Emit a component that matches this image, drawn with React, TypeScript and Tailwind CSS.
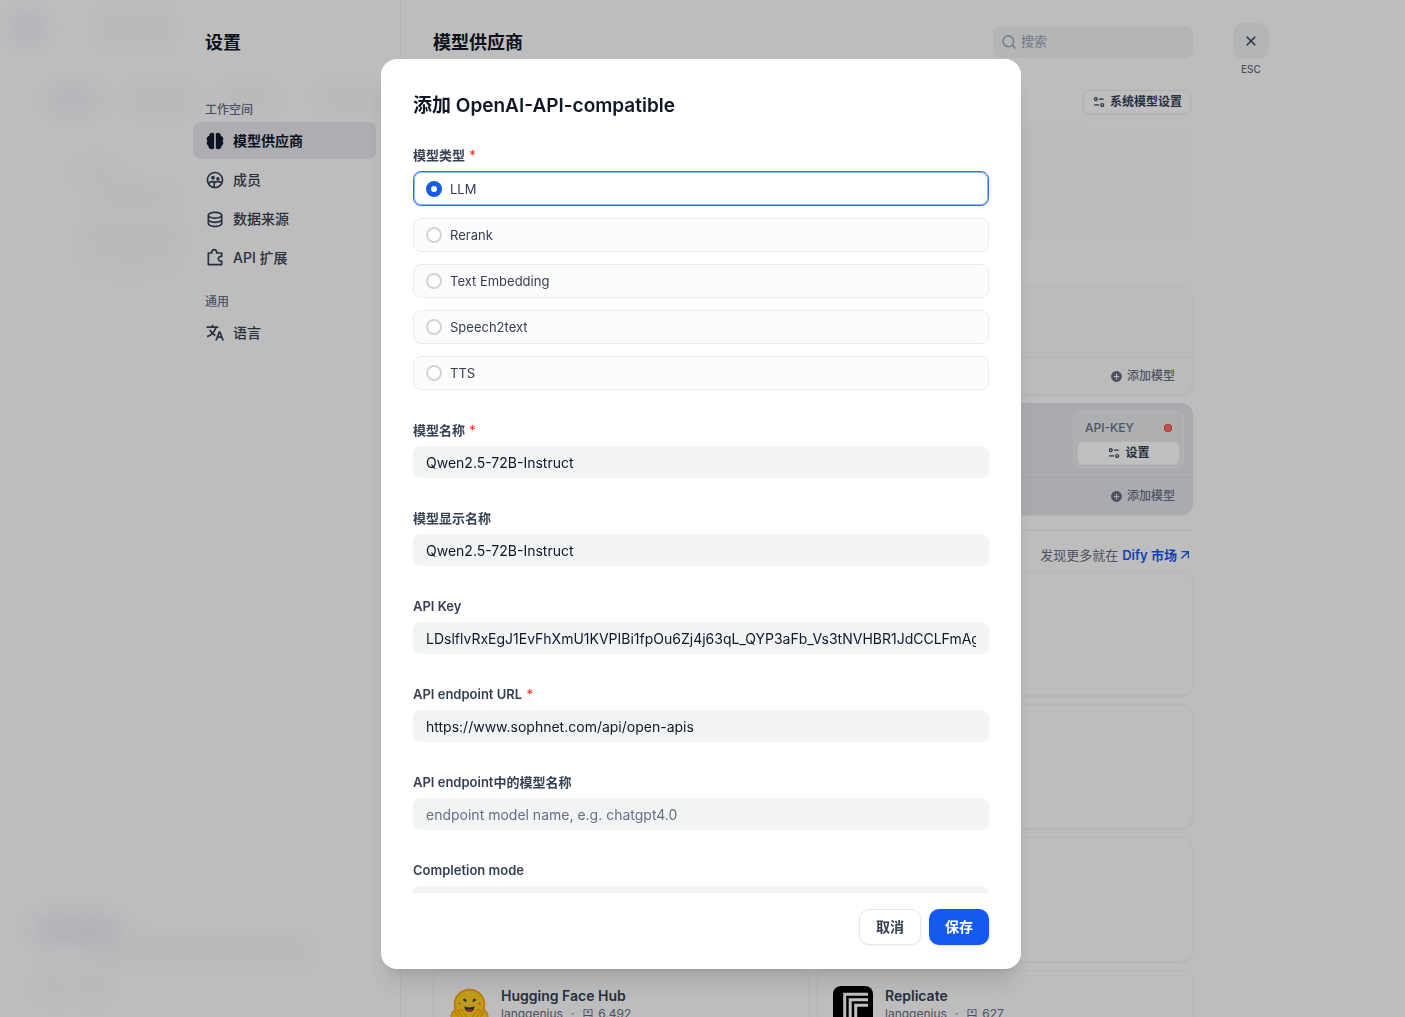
import { useState } from 'react';
import type { ReactNode } from 'react';
import type { IconType } from 'react-icons';
import {
  RiAddCircleFill,
  RiArrowRightUpLine,
  RiBrain2Fill,
  RiCloseLine,
  RiDatabase2Line,
  RiEqualizer2Line,
  RiGroup2Line,
  RiInstallLine,
  RiPuzzle2Line,
  RiSearchLine,
  RiTranslate2,
} from 'react-icons/ri';

type NavItem = {
  label: string;
  icon: IconType;
  active?: boolean;
};

type NavGroup = {
  title: string;
  items: NavItem[];
};

type TextField = {
  id: string;
  label: string;
  required?: boolean;
  value?: string;
  placeholder?: string;
};

const navGroups: NavGroup[] = [
  {
    title: '工作空间',
    items: [
      { label: '模型供应商', icon: RiBrain2Fill, active: true },
      { label: '成员', icon: RiGroup2Line },
      { label: '数据来源', icon: RiDatabase2Line },
      { label: 'API 扩展', icon: RiPuzzle2Line },
    ],
  },
  {
    title: '通用',
    items: [{ label: '语言', icon: RiTranslate2 }],
  },
];

const modelTypes = ['LLM', 'Rerank', 'Text Embedding', 'Speech2text', 'TTS'];

const textFields: TextField[] = [
  { id: 'model-name', label: '模型名称', required: true, value: 'Qwen2.5-72B-Instruct' },
  { id: 'display-name', label: '模型显示名称', value: 'Qwen2.5-72B-Instruct' },
  {
    id: 'api-key',
    label: 'API Key',
    value: 'LDslflvRxEgJ1EvFhXmU1KVPIBi1fpOu6Zj4j63qL_QYP3aFb_Vs3tNVHBR1JdCCLFmAgN',
  },
  { id: 'endpoint-url', label: 'API endpoint URL', required: true, value: 'https://www.sophnet.com/api/open-apis' },
  { id: 'endpoint-model', label: 'API endpoint中的模型名称', placeholder: 'endpoint model name, e.g. chatgpt4.0' },
];

function Backdrop() {
  return (
    <svg className="pointer-events-none absolute inset-0 h-full w-full" aria-hidden="true">
      <defs>
        <filter id="soft" x="-100%" y="-100%" width="300%" height="300%">
          <feGaussianBlur stdDeviation="12" />
        </filter>
      </defs>
      <g filter="url(#soft)" fill="#f4f4f4">
        <circle cx="28" cy="27" r="14" fill="#e6eaf6" />
        <rect x="100" y="18" width="70" height="20" />
        <rect x="50" y="90" width="46" height="18" fill="#ebeef6" />
        <rect x="130" y="90" width="60" height="18" />
        <rect x="225" y="90" width="50" height="14" />
        <rect x="320" y="90" width="70" height="16" />
        <rect x="75" y="165" width="40" height="10" />
        <rect x="95" y="190" width="75" height="12" />
        <rect x="85" y="228" width="95" height="14" />
        <rect x="85" y="258" width="90" height="8" />
        <rect x="36" y="920" width="82" height="20" fill="#e6e8f6" />
        <rect x="90" y="943" width="220" height="16" />
        <circle cx="53" cy="987" r="12" />
        <circle cx="92" cy="987" r="12" />
      </g>
    </svg>
  );
}

function HuggingFaceLogo() {
  return (
    <svg viewBox="0 0 40 40" className="h-10 w-10 shrink-0" aria-hidden="true">
      <circle cx="20.500" cy="18.500" r="15" fill="#ffd21e" stroke="#ff9d0b" strokeWidth="1.600" />
      <circle cx="10.500" cy="17.500" r="1.4" fill="#ff8a4a" />
      <circle cx="30.500" cy="17.500" r="1.4" fill="#ff8a4a" />
      <path d="M13.800 14.500c.1-1.800 2.400-2.500 3.400-.7.500.9.200 2.200-.5 2.600-.5-.5-.6-1.300-1.300-1.500-.5-.1-1 .1-1.600-.4z" fill="#3a3b45" />
      <path d="M27.200 14.500c-.1-1.800-2.400-2.500-3.400-.7-.5.900-.2 2.200.5 2.600.5-.5.600-1.300 1.300-1.500.5-.1 1 .1 1.600-.4z" fill="#3a3b45" />
      <path d="M15.500 20c1.500 1.100 3.100 1.400 5 1.400s3.500-.3 5-1.400c.1 3.600-1.800 6-5 6s-5.100-2.400-5-6z" fill="#3a3b45" />
      <path d="M17.500 24.600c.7-1.200 1.900-1.600 3-.9 1.100-.7 2.300-.3 3 .9-.8.900-1.700 1.400-3 1.400s-2.200-.5-3-1.400z" fill="#ff323d" />
      <g fill="#ffd21e" stroke="#ff9d0b" strokeWidth="1.200">
        <path d="M3.200 28c-1-2 .8-3.300 2.200-2.100-1.200-2.200 1-3.400 2.400-1.800l2.700 2.900c-1.200-3.400 1.200-5.200 2.800-2.200l4.400 6.200c2.200 4 0 8.200-5.700 8.200C6.500 39.200 3 35 2.200 30.500c-.3-1.300.2-2.200 1-2.500z" />
        <path d="M37.800 28c1-2-.8-3.300-2.200-2.100 1.200-2.200-1-3.400-2.400-1.800L30.500 27c1.200-3.400-1.200-5.200-2.800-2.200L23.300 31c-2.200 4 0 8.200 5.700 8.200 5.500 0 9-4.200 9.800-8.700.3-1.300-.2-2.200-1-2.500z" />
        <path d="M5.500 26l4.300 4.500M10.500 27l3 4.500M35.500 26l-4.300 4.500M30.500 27l-3 4.500" fill="none" />
      </g>
    </svg>
  );
}

function ReplicateLogo() {
  return (
    <svg viewBox="0 0 40 40" className="h-10 w-10 shrink-0" aria-hidden="true">
      <rect width="40" height="40" rx="8" fill="#000" />
      <g fill="none" stroke="#fff" strokeWidth="3">
        <path d="M11.700 40V8.300H35" />
        <path d="M17.200 40V13.800H35" />
        <path d="M22.700 40V19.300H35" />
      </g>
    </svg>
  );
}

function Sidebar() {
  return (
    <aside className="border-r border-[#f1f2f4] pt-[29px] pr-6 pl-4">
      <h1 className="mb-[45px] px-3 text-lg leading-7 font-semibold text-[#101828]">设置</h1>
      <nav className="space-y-[18px]">
        {navGroups.map((group) => (
          <div key={group.title}>
            <div className="mb-1 px-3 text-xs leading-4 font-medium text-[#676f83]">{group.title}</div>
            <div className="flex flex-col gap-0.5">
              {group.items.map(({ label, icon: Icon, active }) => (
                <a
                  key={label}
                  href="#"
                  className={
                    active
                      ? 'flex h-[37px] items-center gap-2 rounded-lg bg-[#e8e8ee] px-3 text-sm font-semibold text-[#101828]'
                      : 'flex h-[37px] items-center gap-2 rounded-lg px-3 text-sm font-medium text-[#354052]'
                  }
                >
                  <Icon className="h-5 w-5 shrink-0" />
                  {label}
                </a>
              ))}
            </div>
          </div>
        ))}
      </nav>
    </aside>
  );
}

function AddModelRow() {
  return (
    <div className="flex h-[37px] items-center justify-end border-t border-black/3 pr-[17px]">
      <button className="flex items-center gap-1 text-xs font-medium text-[#676f83]">
        <RiAddCircleFill className="h-[13px] w-[13px]" />
        添加模型
      </button>
    </div>
  );
}

function PluginCard({ name, installs, logo }: { name?: string; installs?: string; logo?: ReactNode }) {
  return (
    <div className="h-[125px] rounded-xl border border-[#f4f5f6] bg-[#fdfdfe] p-[15px] shadow-xs">
      {name && (
        <div className="flex gap-3">
          {logo}
          <div>
            <div className="text-sm leading-5 font-semibold text-[#354052]">{name}</div>
            <div className="flex items-center text-xs leading-4 text-[#676f83]">
              langgenius
              <span className="mx-2">·</span>
              <RiInstallLine className="mr-1 h-3 w-3" />
              {installs}
            </div>
          </div>
        </div>
      )}
    </div>
  );
}

function ProviderPage() {
  return (
    <main className="min-w-0 px-8 pt-[26px]">
      <header className="mb-8 flex h-8 items-center justify-between">
        <h2 className="pt-0.5 text-lg font-semibold text-[#101828]">模型供应商</h2>
        <label className="flex h-8 w-[200px] items-center gap-1 rounded-lg bg-[#f1f2f5] px-2">
          <RiSearchLine className="h-4 w-4 text-[#98a2b2]" />
          <input
            aria-label="搜索"
            placeholder="搜索"
            className="min-w-0 flex-1 bg-transparent text-[13px] outline-none placeholder:text-[#98a2b2]"
          />
        </label>
      </header>

      <div className="mb-3 flex justify-end pr-0.5">
        <button className="flex h-6 items-center gap-1 rounded-md border border-[#ebecee] bg-[#fefefe] px-2 text-xs font-semibold text-[#354052] shadow-xs">
          <RiEqualizer2Line className="h-3.5 w-3.5" />
          系统模型设置
        </button>
      </div>

      <div className="mb-[45px] h-[114px] rounded-xl bg-linear-to-r from-[#f2f5fa] to-[#fbfbfb]" />

      <div className="space-y-2">
        <section className="rounded-xl border border-[#f3f4f5] bg-[#fafafb] shadow-xs">
          <div className="h-[71px]" />
          <AddModelRow />
        </section>
        <section className="rounded-xl border border-[#e1e3e6] bg-[#e3e5e8] shadow-xs">
          <div className="flex h-[73px] justify-end pt-[7px] pr-2">
            <div className="h-[57px] w-[111px] rounded-lg border border-white/30 bg-white/20 p-[3px]">
              <div className="flex h-[26px] items-center justify-between px-2 text-xs font-medium text-[#676f83]">
                API-KEY
                <span className="h-2 w-2 rounded-[3px] border border-[#f04438] bg-[#f97066]" />
              </div>
              <button className="flex h-6 w-full items-center justify-center gap-1 rounded-md border border-black/5 bg-white text-xs font-semibold text-[#354052]">
                <RiEqualizer2Line className="h-3.5 w-3.5" />
                设置
              </button>
            </div>
          </div>
          <AddModelRow />
        </section>
      </div>

      <div className="mt-[15px] mb-[6px] flex h-[35px] items-end justify-end gap-1 border-t border-[#eceef0] text-[13px] leading-5 text-[#676f83]">
        发现更多就在
        <a href="#" className="flex items-center font-semibold text-[#155aef]">
          Dify 市场
          <RiArrowRightUpLine className="h-4 w-4" />
        </a>
      </div>

      <div className="grid grid-cols-2 gap-2">
        <PluginCard />
        <PluginCard />
        <PluginCard />
        <PluginCard />
        <PluginCard />
        <PluginCard />
        <PluginCard name="Hugging Face Hub" installs="6,492" logo={<HuggingFaceLogo />} />
        <PluginCard name="Replicate" installs="627" logo={<ReplicateLogo />} />
      </div>
    </main>
  );
}

function RequiredMark() {
  return <span className="ml-1 text-[#f04438]">*</span>;
}

function AddModelDialog() {
  const [modelType, setModelType] = useState('LLM');

  return (
    <div className="fixed inset-0 flex items-start justify-center bg-black/25 pt-[59px] pr-[3px]">
      <form
        role="dialog"
        aria-labelledby="dialog-title"
        className="flex max-h-[calc(100vh-107px)] w-full max-w-[640px] flex-col overflow-hidden rounded-2xl bg-white shadow-xl"
      >
        <div className="min-h-0 flex-1 overflow-y-auto px-8 pt-[33px] pb-4 [scrollbar-width:none]">
          <h2 id="dialog-title" className="mb-[25px] text-[19px] leading-7 font-semibold text-[#101828]">
            添加 OpenAI-API-compatible
          </h2>

          <fieldset className="mb-[30px]">
            <legend className="mb-1.5 text-[13px] leading-5 font-semibold text-[#354052]">
              模型类型
              <RequiredMark />
            </legend>
            <div className="space-y-3">
              {modelTypes.map((type) => (
                <label
                  key={type}
                  className={
                    modelType === type
                      ? 'flex h-[35px] items-center gap-2 rounded-lg border border-[#296dff] bg-white px-3 text-[13px] leading-5 text-[#354052] shadow-xs inset-ring inset-ring-[#296dff]/50'
                      : 'flex h-[34px] items-center gap-2 rounded-lg border border-[#e9ebf0] bg-[#fcfcfd] px-3 text-[13px] leading-5 text-[#354052]'
                  }
                >
                  <input
                    type="radio"
                    name="model-type"
                    checked={modelType === type}
                    onChange={() => setModelType(type)}
                    className="h-4 w-4 appearance-none rounded-full border-2 border-[#d0d5dc] bg-white checked:border-5 checked:border-[#155aef]"
                  />
                  {type}
                </label>
              ))}
            </div>
          </fieldset>

          <div className="space-y-[30px]">
            {textFields.map((field) => (
              <div key={field.id}>
                <label htmlFor={field.id} className="mb-1.5 block text-[13px] leading-5 font-semibold text-[#354052]">
                  {field.label}
                  {field.required && <RequiredMark />}
                </label>
                <input
                  id={field.id}
                  defaultValue={field.value}
                  placeholder={field.placeholder}
                  className="block h-8 w-full rounded-lg bg-[#f2f3f5] px-[13px] text-sm text-[#101828] outline-none placeholder:text-[#676f83]"
                />
              </div>
            ))}
            <div>
              <label htmlFor="completion-mode" className="mb-1.5 block text-[13px] leading-5 font-semibold text-[#354052]">
                Completion mode
              </label>
              <select id="completion-mode" className="block h-8 w-full appearance-none rounded-lg bg-[#f2f3f5] px-[13px] text-sm" />
            </div>
          </div>
        </div>

        <div className="flex justify-end gap-2 px-8 pt-4 pb-6">
          <button
            type="button"
            className="h-9 rounded-[10px] border border-[#e6e7ea] bg-white px-4 text-sm font-semibold text-[#354052] shadow-xs"
          >
            取消
          </button>
          <button type="button" className="h-9 rounded-[10px] bg-[#155aef] px-4 text-sm font-semibold text-white shadow-sm">
            保存
          </button>
        </div>
      </form>
    </div>
  );
}

export default function App() {
  return (
    <div className="relative h-screen overflow-hidden bg-[#fcfcfc] font-['Inter','Noto_Sans_CJK_SC',sans-serif]">
      <Backdrop />
      <div className="relative grid h-full grid-cols-[1fr_224px_minmax(0,824px)_1fr] pr-[3px]">
        <div />
        <Sidebar />
        <ProviderPage />
        <div className="flex flex-col items-start pt-[23px] pl-2">
          <div className="flex flex-col items-center">
            <button
              aria-label="关闭"
              className="flex h-9 w-9 items-center justify-center rounded-[10px] bg-[#f1f2f5] text-[#354052]"
            >
              <RiCloseLine className="h-[18px] w-[18px]" />
            </button>
            <span className="mt-0.5 text-[10px] leading-4 font-medium text-[#676f83]">ESC</span>
          </div>
        </div>
      </div>
      <AddModelDialog />
    </div>
  );
}
